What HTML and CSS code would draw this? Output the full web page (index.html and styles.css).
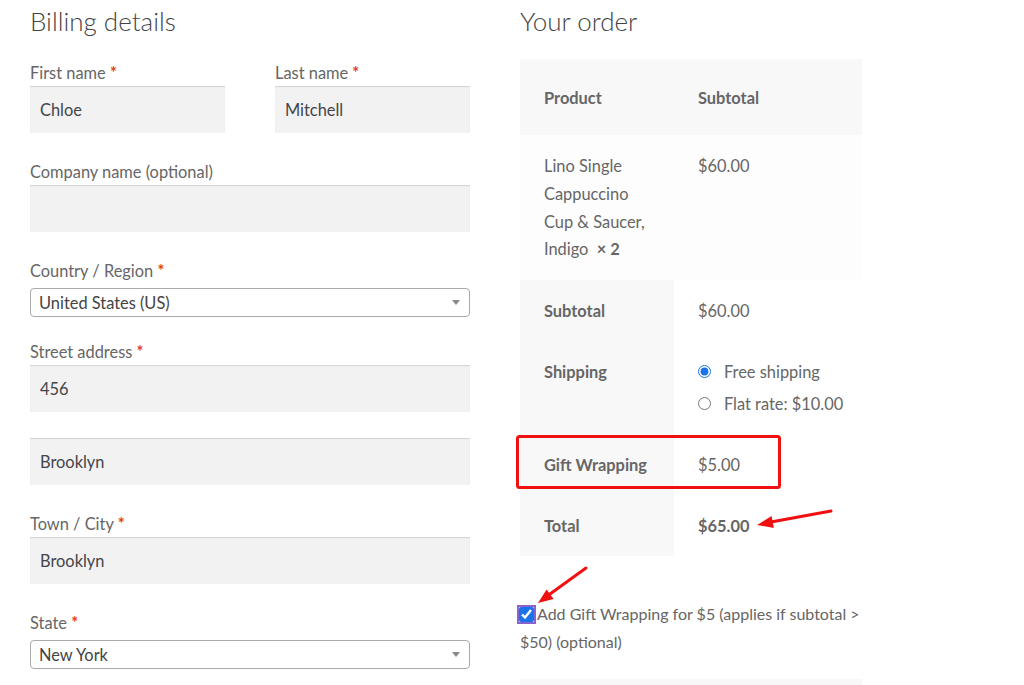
FILE: index.html
```html
<!DOCTYPE html>
<html lang="en">
<head>
<meta charset="utf-8">
<title>Checkout</title>
<link rel="stylesheet" href="styles.css">
</head>
<body>
<div class="page">
  <div class="col-billing">
    <h3 class="heading">Billing details</h3>
    <div class="row-2">
      <div class="field">
        <label class="lbl">First name <abbr class="req">*</abbr></label>
        <input class="txt" type="text" value="Chloe">
      </div>
      <div class="field">
        <label class="lbl">Last name <abbr class="req">*</abbr></label>
        <input class="txt" type="text" value="Mitchell">
      </div>
    </div>
    <div class="field">
      <label class="lbl">Company name <span class="opt">(optional)</span></label>
      <input class="txt" type="text" value="">
    </div>
    <div class="field field-select">
      <label class="lbl">Country / Region <abbr class="req">*</abbr></label>
      <div class="sel"><span>United States (US)</span><b class="arrow"></b></div>
    </div>
    <div class="field">
      <label class="lbl">Street address <abbr class="req">*</abbr></label>
      <input class="txt" type="text" value="456">
      <input class="txt txt-second" type="text" value="Brooklyn">
    </div>
    <div class="field">
      <label class="lbl">Town / City <abbr class="req">*</abbr></label>
      <input class="txt" type="text" value="Brooklyn">
    </div>
    <div class="field field-select">
      <label class="lbl">State <abbr class="req">*</abbr></label>
      <div class="sel"><span>New York</span><b class="arrow"></b></div>
    </div>
  </div>

  <div class="col-order">
    <h3 class="heading">Your order</h3>
    <table class="order">
      <colgroup><col class="c1"><col class="c2"></colgroup>
      <thead>
        <tr><th>Product</th><th>Subtotal</th></tr>
      </thead>
      <tbody>
        <tr>
          <td>Lino Single Cappuccino Cup &amp; Saucer, Indigo&nbsp;&nbsp;<strong class="qty">×&nbsp;2</strong></td>
          <td>$60.00</td>
        </tr>
      </tbody>
      <tfoot>
        <tr><th>Subtotal</th><td>$60.00</td></tr>
        <tr class="ship">
          <th>Shipping</th>
          <td>
            <ul class="methods">
              <li><input type="radio" name="ship" checked><span>Free shipping</span></li>
              <li><input type="radio" name="ship"><span>Flat rate: $10.00</span></li>
            </ul>
          </td>
        </tr>
        <tr><th>Gift Wrapping</th><td>$5.00</td></tr>
        <tr><th>Total</th><td><strong>$65.00</strong></td></tr>
      </tfoot>
    </table>
    <p class="gift"><input class="chk" type="checkbox" checked>Add Gift Wrapping for $5 (applies if subtotal &gt; $50) (optional)</p>
    <div class="payment"></div>
  </div>

  <svg class="annot" width="1024" height="685" viewBox="0 0 1024 685">
    <rect x="517.5" y="436.5" width="262" height="51" rx="2" fill="none" stroke="#f01010" stroke-width="3"/>
    <line x1="831" y1="511" x2="771" y2="522" stroke="#f01010" stroke-width="3" stroke-linecap="round"/>
    <polygon points="757,525 773.8,527.9 771.6,516.1" fill="#f01010"/>
    <line x1="586" y1="568" x2="550" y2="594" stroke="#f01010" stroke-width="3" stroke-linecap="round"/>
    <polygon points="538,603 553.6,599 546.6,589.4" fill="#f01010"/>
  </svg>
</div>
</body>
</html>
```

FILE: styles.css
```css
* { box-sizing: border-box; }

html, body {
  margin: 0;
  padding: 0;
  background: #ffffff;
}

body {
  font-family: "Lato", "Liberation Sans", sans-serif;
  font-size: 16.4px;
  color: #666;
  overflow: hidden;
  height: 685px;
}

.page {
  position: relative;
  display: flex;
  gap: 50px;
  padding-left: 30px;
}

.col-billing { width: 440px; }
.col-order { width: 342px; }

.heading {
  margin: 0 0 17px;
  font-size: 26px;
  line-height: 42px;
  font-weight: 300;
  color: #444;
}

.row-2 {
  display: flex;
  gap: 50px;
}
.row-2 .field { flex: 1; }

.field { margin-bottom: 25px; }
.field-select { margin-bottom: 21px; }

.lbl {
  display: block;
  line-height: 27px;
  color: #666;
}

.req {
  color: #e2401c;
  text-decoration: none;
  font-weight: 700;
  border: 0;
}

.txt {
  display: block;
  width: 100%;
  height: 47px;
  margin: 0;
  padding: 0 10px;
  border: 0;
  background: #f2f2f2;
  box-shadow: inset 0 1px 1px rgba(0,0,0,0.125);
  font: inherit;
  color: #43454b;
  outline: none;
}

.txt-second { margin-top: 26px; }

.sel {
  position: relative;
  margin-top: 4px;
  height: 29px;
  border: 1px solid #aaa;
  border-radius: 4px;
  background: #fff;
  padding-left: 8px;
  line-height: 27px;
  color: #444;
}

.arrow {
  position: absolute;
  right: 9px;
  top: 11px;
  width: 0;
  height: 0;
  border-left: 4px solid transparent;
  border-right: 4px solid transparent;
  border-top: 5px solid #888;
}

.order {
  width: 342px;
  border-collapse: collapse;
  border-spacing: 0;
  margin-top: 1px;
  table-layout: fixed;
}
.order .c1 { width: 154px; }
.order .c2 { width: 188px; }

.order th, .order td {
  text-align: left;
  vertical-align: top;
  padding: 17px 24px;
  line-height: 27.5px;
}

.order th { font-weight: 700; color: #666; }

.order thead th {
  background: #f8f8f8;
  padding: 25px 24px 24px;
  line-height: 27px;
}

.order tbody td {
  background: #fdfdfd;
  color: #666;
  line-height: 27.8px;
  padding-top: 17px;
  padding-bottom: 17px;
}

.order tfoot th { background: #f8f8f8; line-height: 27px; }
.order tfoot td { background: #fff; line-height: 27px; white-space: nowrap; }

.methods {
  list-style: none;
  margin: 0;
  padding: 0;
}
.methods li {
  display: flex;
  align-items: center;
  height: 27px;
  white-space: nowrap;
}
.methods li + li { margin-top: 5px; }
.methods input {
  flex: none;
  margin: 0 13px 0 0;
  width: 13px;
  height: 13px;
  accent-color: #1a73e8;
}

.gift {
  margin: 44px 0 0;
  font-size: 16px;
  line-height: 28px;
  color: #666;
}
.chk {
  width: 15px;
  height: 15px;
  margin: 0 3px 0 -1px;
  vertical-align: -2px;
  outline: 2px solid #8a63d2;
  outline-offset: 0;
  accent-color: #1a73e8;
}

.payment {
  margin-top: 23px;
  height: 40px;
  background: #f8f8f8;
}

.annot {
  position: absolute;
  left: 0;
  top: 0;
  pointer-events: none;
}
```
